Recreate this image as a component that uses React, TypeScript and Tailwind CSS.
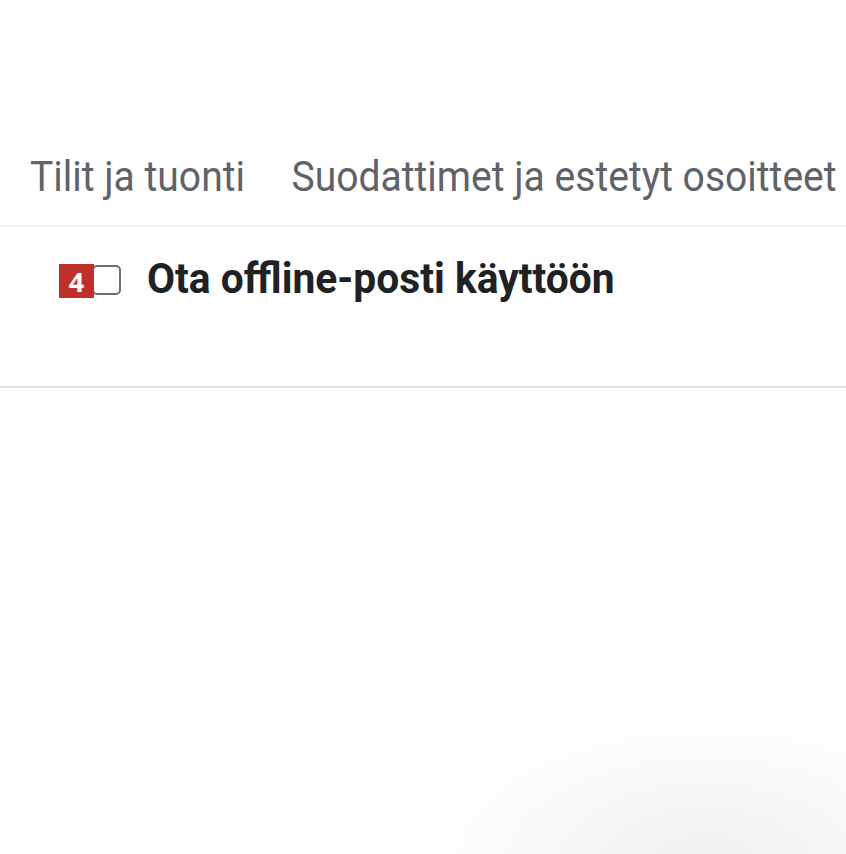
const tabs = ['Tilit ja tuonti', 'Suodattimet ja estetyt osoitteet'];

export default function App() {
  return (
    <div className="relative h-[854px] w-[846px] overflow-hidden bg-white font-['Roboto',sans-serif]">
      <div className="h-[140px]" />
      <div className="h-[87px] border-b-2 border-[#eef1f2] pl-[30px] pt-[13px]">
        <div className="flex origin-left scale-x-[0.93] gap-[50px] whitespace-nowrap text-[42px] leading-[48px] text-[#5f6368]">
          {tabs.map((t) => (
            <span key={t}>{t}</span>
          ))}
        </div>
      </div>
      <div className="flex h-[161px] items-start border-b-2 border-[#e0e0e0]">
        <div className="relative ml-[92px] mt-[38px] h-[30px] w-[29px] rounded-[5px] border-2 border-[#6b6e72] bg-white">
          <span className="absolute left-[-35px] top-[-3px] flex h-[34px] w-[35px] items-center justify-center bg-[#c0302b] font-['Open_Sans',sans-serif] text-[27px] font-bold leading-none text-white">
            4
          </span>
        </div>
        <span className="ml-[26px] mt-[28px] origin-left scale-x-[0.97] whitespace-nowrap text-[42px] font-bold leading-[48px] text-[#202124]">
          Ota offline-posti käyttöön
        </span>
      </div>
      <div className="pointer-events-none absolute bottom-[-170px] right-[-160px] h-[320px] w-[600px] rounded-full bg-[radial-gradient(closest-side,rgba(0,0,0,0.06),rgba(0,0,0,0))]" />
    </div>
  );
}
